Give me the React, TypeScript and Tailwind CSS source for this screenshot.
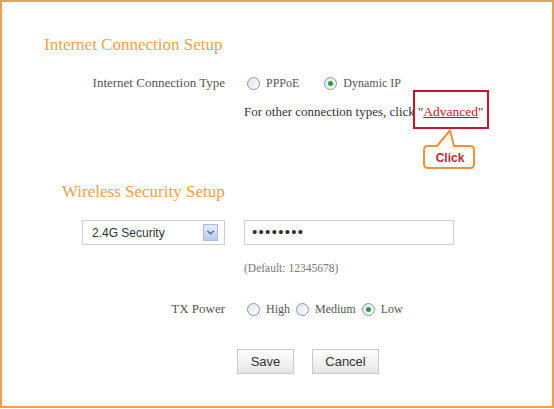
import React from 'react';
import { ChevronDown } from 'lucide-react';

function Radio({ checked = false }: { checked?: boolean }) {
  return (
    <span className="inline-flex h-[13px] w-[13px] shrink-0 items-center justify-center rounded-full border border-[#8797b0] bg-linear-to-br from-[#dfe3ea] to-white">
      {checked && <span className="h-[5px] w-[5px] rounded-full bg-[#2f9a3a]" />}
    </span>
  );
}

function Option({ label, checked, className = '' }: { label: string; checked?: boolean; className?: string }) {
  return (
    <label className={`flex items-center ${className}`}>
      <Radio checked={checked} />
      <span className="ml-[6px]">{label}</span>
    </label>
  );
}

export default function App() {
  return (
    <div className="h-[409px] w-[554px] bg-white">
      <div className="h-[408px] w-[554px] border-2 border-[#ec9f4c] bg-white pt-[33px] font-['Liberation_Serif','Times_New_Roman',serif] text-[#555555]">
        <h2 className="pl-[42px] text-[17px] leading-[20px] text-[#eba24e]">Internet Connection Setup</h2>

        {/* connection type */}
        <div className="mt-[18px] flex h-[20px] items-center">
          <div className="w-[223px] text-right text-[13px]">Internet Connection Type</div>
          <div className="ml-[22px] flex items-center text-[12px]">
            <Option label="PPPoE" />
            <Option label="Dynamic IP" checked className="ml-[25px]" />
          </div>
        </div>

        <div className="mt-[9px] flex h-[20px] items-center pl-[242px] text-[13px] leading-[20px] text-[#333333]">
          For other connection types, click&nbsp;
          <span className="relative inline-block leading-[20px]">
            "<span className="text-[13.5px] text-[#c8102e] underline">Advanced</span>"
            <span className="absolute -top-[12px] -bottom-[7px] -left-[5px] -right-[6px] border-2 border-[#c0162e]" />
            <svg className="absolute top-[27px] left-[5px]" width="53" height="41" viewBox="0 0 53 41">
              <path
                d="M5 17 H14 L27 1.5 L31 17 H47 Q51 17 51 21 V35 Q51 39 47 39 H5 Q1 39 1 35 V21 Q1 17 5 17 Z"
                fill="white"
                stroke="#f0913a"
                strokeWidth="2"
                strokeLinejoin="round"
              />
            </svg>
            <span className="absolute top-[45px] left-[6px] flex h-[22px] w-[52px] items-center justify-center font-['Liberation_Sans',Arial,sans-serif] text-[12px] font-bold text-[#c41e3a]">
              Click
            </span>
          </span>
        </div>

        <h2 className="mt-[60px] pl-[60px] text-[17px] leading-[20px] text-[#eba24e]">Wireless Security Setup</h2>

        {/* security */}
        <div className="mt-[18px] flex items-center">
          <div className="flex w-[223px] justify-end">
            <div className="flex h-[25px] w-[143px] items-center justify-between border border-[#cfcfcf] bg-white pr-[6px] pl-[9px] font-['Liberation_Sans',Arial,sans-serif] text-[12px] text-[#333333]">
              <span>2.4G Security</span>
              <span className="flex h-[17px] w-[15px] items-center justify-center border border-[#a9bde0] bg-linear-to-b from-[#e3ecfa] to-[#b8cbed]">
                <ChevronDown size={11} strokeWidth={3} className="text-[#3e5a8c]" />
              </span>
            </div>
          </div>
          <div className="ml-[19px] flex h-[25px] w-[210px] items-center border border-[#cfcfcf] pl-[7px] font-['Liberation_Sans',Arial,sans-serif] text-[15px] tracking-[1.3px] text-[#333333]">
            ••••••••
          </div>
        </div>

        <div className="mt-[15px] pl-[242px] text-[11.5px] leading-[16px] text-[#777777]">(Default: 12345678)</div>

        {/* tx power */}
        <div className="mt-[23px] flex h-[20px] items-center">
          <div className="w-[223px] text-right text-[13px]">TX Power</div>
          <div className="ml-[22px] flex items-center text-[12px]">
            <Option label="High" />
            <Option label="Medium" className="ml-[6px]" />
            <Option label="Low" checked className="ml-[6px]" />
          </div>
        </div>

        <div className="mt-[30px] flex pl-[235px] font-['Liberation_Sans',Arial,sans-serif] text-[13px] text-[#333333]">
          <button className="h-[25px] w-[57px] border border-[#c9c9c9] bg-linear-to-b from-white to-[#e6e6e6]">Save</button>
          <button className="ml-[18px] h-[25px] w-[67px] border border-[#c9c9c9] bg-linear-to-b from-white to-[#e6e6e6]">Cancel</button>
        </div>
      </div>
    </div>
  );
}
